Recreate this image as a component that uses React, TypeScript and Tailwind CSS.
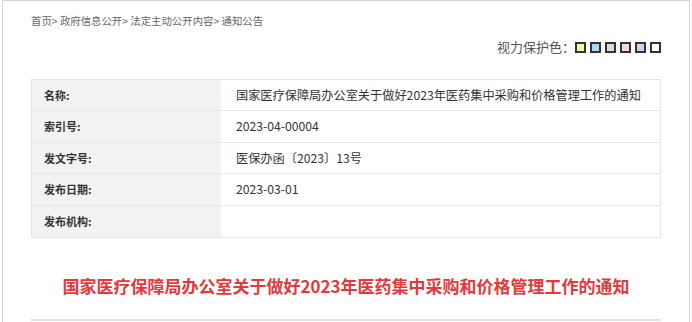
const swatches = ["#f8f4ab", "#a8dbf1", "#dcdcdc", "#fad4dc", "#dfc8f4", "#ffffff"];

const rows: { label: string; value: string }[] = [
  { label: "名称:", value: "国家医疗保障局办公室关于做好2023年医药集中采购和价格管理工作的通知" },
  { label: "索引号:", value: "2023-04-00004" },
  { label: "发文字号:", value: "医保办函〔2023〕13号" },
  { label: "发布日期:", value: "2023-03-01" },
  { label: "发布机构:", value: "" },
];

export default function App() {
  return (
    <div
      className="h-[322px] w-[692px] overflow-hidden bg-white"
      style={{ fontFamily: '"Noto Sans CJK SC", "Noto Sans", sans-serif' }}
    >
      <div className="ml-[2px] h-[340px] w-[688px] border border-[#d4d4d4] px-[28px]">
        {/* breadcrumb */}
        <div className="pt-[9px] text-[10.4px] leading-[22px] text-[#666]">
          首页&gt; 政府信息公开&gt; 法定主动公开内容&gt; 通知公告
        </div>

        {/* eye-care colours */}
        <div className="mt-[4px] flex h-[22px] items-center justify-end">
          <span className="text-[13px] text-[#555]">视力保护色：</span>
          <div className="flex gap-[4px]">
            {swatches.map((c) => (
              <span
                key={c}
                className="block h-[11px] w-[11px] border-2 border-[#333]"
                style={{ backgroundColor: c }}
              />
            ))}
          </div>
        </div>

        {/* info table */}
        <div className="mt-[21px] border border-[#e6e6e6]">
          {rows.map((row, i) => (
            <div
              key={row.label}
              className={`flex h-[31.4px] ${i < rows.length - 1 ? "border-b border-[#e8e8e8]" : ""}`}
            >
              <div className="flex w-[189px] shrink-0 items-center bg-[#f2f2f2] pl-[12px] text-[11px] font-bold text-[#333]">
                {row.label}
              </div>
              <div className="flex items-center pl-[15px] text-[12.2px] text-[#333]">
                {row.value}
              </div>
            </div>
          ))}
        </div>

        {/* title */}
        <h1 className="mt-[33px] text-center text-[17px] font-bold leading-[30px] text-[#e4393c]">
          国家医疗保障局办公室关于做好2023年医药集中采购和价格管理工作的通知
        </h1>

        <div className="mt-[18px] h-[2px] bg-[#e2e2e2]" />
      </div>
    </div>
  );
}
